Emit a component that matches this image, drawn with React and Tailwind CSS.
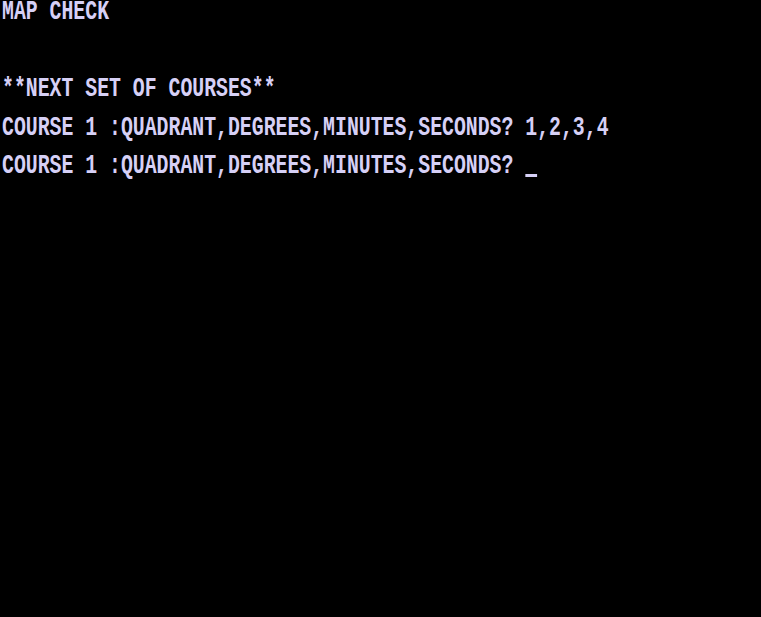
const lines = [
  'MAP CHECK',
  '',
  '**NEXT SET OF COURSES**',
  'COURSE 1 :QUADRANT,DEGREES,MINUTES,SECONDS? 1,2,3,4',
  'COURSE 1 :QUADRANT,DEGREES,MINUTES,SECONDS? ',
];

const Row = ({ text, cursor }) => (
  <div className="h-[38.56px] pl-[2px]">
    <div
      className="origin-top-left scale-x-[0.734] whitespace-pre text-[27px] font-bold leading-[24px] text-[#d6d0f6]"
      style={{ fontFamily: '"Liberation Mono", monospace' }}
    >
      {text}
      {cursor && <span className="inline-block w-[16.2px] h-[3px] bg-[#d6d0f6] align-[-4px]" />}
    </div>
  </div>
);

export default function App() {
  return (
    <div className="w-[761px] h-[617px] bg-black overflow-hidden">
      {lines.map((t, i) => (
        <Row key={i} text={t} cursor={i === lines.length - 1} />
      ))}
    </div>
  );
}
